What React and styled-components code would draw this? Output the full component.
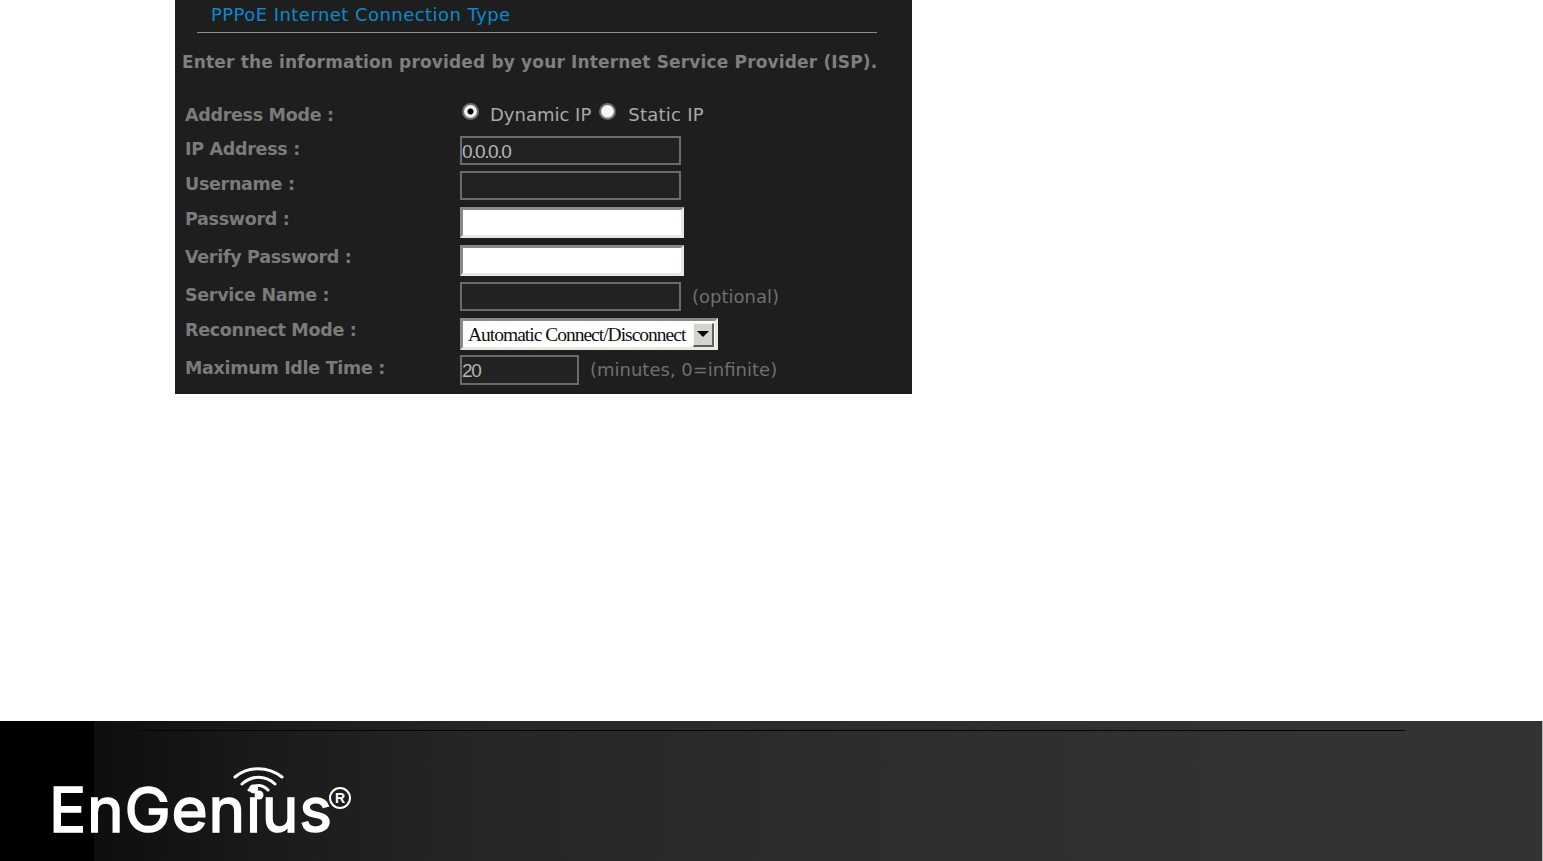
import React from "react";
import styled, { createGlobalStyle } from "styled-components";

const GlobalStyle = createGlobalStyle`
    html, body {
        margin: 0;
        padding: 0;
        background: #fff;
    }
    body {
        font-family: "DejaVu Sans", sans-serif;
    }
`;

const Page = styled.div`
    width: 1543px;
    height: 861px;
    display: flex;
    flex-direction: column;
    overflow: hidden;
`;

const Content = styled.main`
    flex: 1;
    padding-left: 175px;
`;

const Panel = styled.section`
    width: 737px;
    height: 394px;
    box-sizing: border-box;
    background: #1e1e1e;
    padding-left: 7px;
`;

const TitleBar = styled.div`
    margin-left: 15px;
    width: 680px;
    height: 33px;
    box-sizing: border-box;
    border-bottom: 1px solid #8f8f8f;
    padding: 4px 0 0 14px;
`;

const Title = styled.h1`
    margin: 0;
    font-size: 18px;
    line-height: 22px;
    font-weight: 400;
    letter-spacing: 0.45px;
    color: #0a8acb;
`;

const Intro = styled.p`
    margin: 18px 0 0;
    font-size: 17px;
    line-height: 22px;
    font-weight: 700;
    letter-spacing: 0.16px;
    color: #7f7f7f;
    white-space: nowrap;
`;

const Form = styled.form`
    display: flex;
    flex-direction: column;
    margin-top: 26px;
`;

const Row = styled.div`
    display: flex;
    align-items: flex-start;
    height: ${(p) => p.$h}px;
    margin-bottom: ${(p) => p.$gap}px;
`;

const Label = styled.label`
    flex: 0 0 278px;
    box-sizing: border-box;
    padding: ${(p) => p.$top}px 0 0 3px;
    font-size: 17.5px;
    line-height: 22px;
    font-weight: 700;
    letter-spacing: -0.3px;
    color: #7b7b7b;
    white-space: nowrap;
`;

const Radio = styled.span`
    flex: none;
    width: 17px;
    height: 17px;
    box-sizing: border-box;
    margin-top: 4px;
    margin-left: ${(p) => p.$left || 0}px;
    border-radius: 50%;
    border: 2px solid #6e6e6e;
    background: ${(p) =>
        p.$checked
            ? "radial-gradient(circle, #000 0 2.5px, #f4f4f4 3.5px)"
            : "#f6f6f6"};
    box-shadow: inset 0 -1px 0 #cfcfcf;
`;

const RadioText = styled.span`
    margin-left: ${(p) => p.$left}px;
    margin-right: ${(p) => p.$right || 0}px;
    padding-top: 5px;
    font-size: 18px;
    line-height: 22px;
    color: #a9a9a9;
    white-space: nowrap;
`;

const StaticText = styled(RadioText)`
    letter-spacing: 0.25px;
`;

const Field = styled.div`
    width: ${(p) => p.$w}px;
    height: ${(p) => p.$h || 29}px;
    box-sizing: border-box;
    border: 2px solid #6b6b6b;
    background: #222;
    color: #b5b5b5;
    font-family: "Liberation Sans", sans-serif;
    font-size: 19px;
    line-height: 28px;
    letter-spacing: -1.4px;
`;

const PasswordField = styled.div`
    width: 224px;
    height: 31px;
    box-sizing: border-box;
    background: #fff;
    border: 3px solid;
    border-color: #8a8a8a #e8e8e0 #e8e8e0 #8a8a8a;
`;

const Hint = styled.span`
    margin-left: 11px;
    padding-top: 4px;
    font-size: 18px;
    line-height: 22px;
    color: #6f6f6f;
    white-space: nowrap;
`;

const Select = styled.div`
    width: 258px;
    height: 32px;
    box-sizing: border-box;
    display: flex;
    align-items: center;
    justify-content: space-between;
    background: #fff;
    border: 3px solid;
    border-color: #8a8a8a #e8e8e0 #e8e8e0 #8a8a8a;
    padding: 1px 0 0 5px;
    color: #111;
    font-family: "Liberation Serif", serif;
    font-size: 19.5px;
    letter-spacing: -1px;
    white-space: nowrap;
`;

const SelectButton = styled.span`
    flex: none;
    width: 21px;
    height: 24px;
    margin-right: 1px;
    display: flex;
    align-items: center;
    justify-content: center;
    box-sizing: border-box;
    background: #d6d3cb;
    border-right: 2px solid #5f5f5f;
    border-bottom: 2px solid #5f5f5f;
    border-top: 1px solid #f4f4f0;
    border-left: 1px solid #f4f4f0;

    &::after {
        content: "";
        border-left: 6px solid transparent;
        border-right: 6px solid transparent;
        border-top: 6px solid #000;
    }
`;

const Footer = styled.footer`
    position: relative;
    flex: none;
    height: 140px;
    box-sizing: border-box;
    padding-top: 9px;
    border-right: 1px solid #b4b4b4;
    background: linear-gradient(
        90deg,
        #000 0,
        #000 94px,
        #0e0e0e 94px,
        #1a1a1a 260px,
        #262626 480px,
        #2c2c2c 800px,
        #333 1300px
    );
`;

const FooterRule = styled.div`
    width: 1265px;
    height: 1px;
    margin-left: 140px;
    background: #050505;
`;

const Logo = styled.div`
    position: relative;
    width: 320px;
    margin: 45px 0 0 49px;
    color: #fff;
    font-family: "Inter", "Liberation Sans", sans-serif;
    font-size: 62px;
    line-height: 68px;
    letter-spacing: 0.8px;
    -webkit-text-stroke: 1.6px #fff;
    white-space: nowrap;
`;

const LogoMark = styled.svg`
    position: absolute;
    left: 179px;
    top: -12px;
`;

const Registered = styled.span`
    position: absolute;
    left: 280px;
    top: 11px;
    width: 22px;
    height: 22px;
    box-sizing: border-box;
    border: 2px solid #fff;
    border-radius: 50%;
    font-family: "Liberation Sans", sans-serif;
    font-size: 14px;
    line-height: 18px;
    font-weight: 700;
    letter-spacing: 0;
    text-align: center;
    -webkit-text-stroke: 0;
`;

const rows = [
    { name: "IP Address :", h: 29, gap: 6, top: 2, value: "0.0.0.0", w: 221 },
    { name: "Username :", h: 29, gap: 7, top: 2, value: "", w: 221 },
];

function App() {
    return (
        <Page>
            <GlobalStyle />
            <Content>
                <Panel>
                    <TitleBar>
                        <Title>PPPoE Internet Connection Type</Title>
                    </TitleBar>
                    <Intro>Enter the information provided by your Internet Service Provider (ISP).</Intro>
                    <Form>
                        <Row $h={32} $gap={5}>
                            <Label $top={5}>Address Mode :</Label>
                            <Radio $checked $left={2} />
                            <RadioText $left={11} $right={8}>Dynamic IP</RadioText>
                            <Radio />
                            <StaticText $left={12}>Static IP</StaticText>
                        </Row>
                        {rows.map((row) => (
                            <Row key={row.name} $h={row.h} $gap={row.gap}>
                                <Label $top={row.top}>{row.name}</Label>
                                <Field $w={row.w}>{row.value}</Field>
                            </Row>
                        ))}
                        <Row $h={31} $gap={7}>
                            <Label $top={1}>Password :</Label>
                            <PasswordField />
                        </Row>
                        <Row $h={31} $gap={6}>
                            <Label $top={1}>Verify Password :</Label>
                            <PasswordField />
                        </Row>
                        <Row $h={29} $gap={7}>
                            <Label $top={2}>Service Name :</Label>
                            <Field $w={221} />
                            <Hint>(optional)</Hint>
                        </Row>
                        <Row $h={32} $gap={5}>
                            <Label $top={1}>Reconnect Mode :</Label>
                            <Select>
                                Automatic Connect/Disconnect
                                <SelectButton />
                            </Select>
                        </Row>
                        <Row $h={30} $gap={0}>
                            <Label $top={2}>Maximum Idle Time :</Label>
                            <Field $w={119} $h={30}>20</Field>
                            <Hint>(minutes, 0=infinite)</Hint>
                        </Row>
                    </Form>
                </Panel>
            </Content>
            <Footer>
                <FooterRule />
                <Logo>
                    <LogoMark width="60" height="36" viewBox="0 0 60 36" fill="none" stroke="#fff" strokeLinecap="round">
                        <path d="M7 13 C 20 2, 40 2, 54 13" strokeWidth="3" />
                        <path d="M14 20 C 24 11, 37 11, 47 20" strokeWidth="3" />
                        <path d="M21 26 C 27 20, 34 20, 40 26" strokeWidth="3" />
                        <circle cx="31" cy="31" r="4.5" fill="#fff" stroke="none" />
                    </LogoMark>
                    EnGenius
                    <Registered>R</Registered>
                </Logo>
            </Footer>
        </Page>
    );
}

export default App;
